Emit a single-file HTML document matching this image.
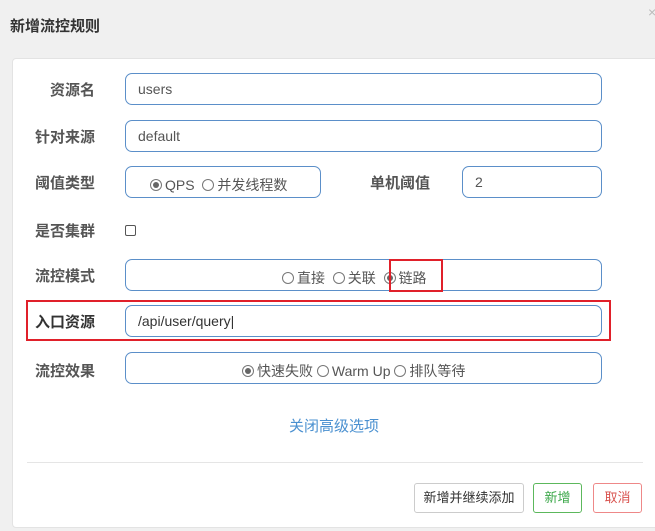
<!DOCTYPE html>
<html><head><meta charset="utf-8"><style>
*{box-sizing:border-box;margin:0;padding:0}
body{width:655px;height:531px;background:#f0f0f0;font-family:"Liberation Sans","Noto Sans CJK SC",sans-serif;position:relative;overflow:hidden;color:#555}
.abs{position:absolute}
.title{left:10px;top:15px;font-size:15px;font-weight:bold;color:#333}
.close{left:648px;top:4px;color:#bbb;font-size:14px}
.card{left:12px;top:58px;width:650px;height:470px;background:#fff;border:1px solid #e3e3e3;border-radius:4px}
.lbl{font-size:15px;font-weight:bold;color:#555;text-align:right;width:62px;left:33px}
.inp{border:1px solid #5b8fc9;border-radius:7px;height:32px;font-size:14px;color:#555;padding:7px 12px;background:#fff}
.rad{display:inline-block;width:12px;height:12px;border:1px solid #777;border-radius:50%;vertical-align:-1px;margin-right:3px;position:relative}
.rad.on::after{content:"";position:absolute;left:2px;top:2px;width:6px;height:6px;border-radius:50%;background:#666}
.btn{height:30px;border:1px solid #ccc;border-radius:3px;font-size:13px;text-align:center;line-height:28px;background:#fff}
</style></head><body>
<div class="abs title">新增流控规则</div>
<div class="abs close">×</div>
<div class="abs card"></div>

<div class="abs lbl" style="top:79px">资源名</div>
<div class="abs inp" style="left:125px;top:73px;width:477px">users</div>

<div class="abs lbl" style="top:126px">针对来源</div>
<div class="abs inp" style="left:125px;top:120px;width:477px">default</div>

<div class="abs lbl" style="top:172px">阈值类型</div>
<div class="abs inp" style="left:125px;top:166px;width:196px;padding-left:24px;padding-top:8px"><span class="rad on"></span>QPS &nbsp;<span class="rad"></span>并发线程数</div>
<div class="abs" style="left:370px;top:172px;font-size:15px;font-weight:bold">单机阈值</div>
<div class="abs inp" style="left:462px;top:166px;width:140px">2</div>

<div class="abs lbl" style="top:220px">是否集群</div>
<div class="abs" style="left:125px;top:225px;width:11px;height:11px;border:1px solid #555;border-radius:2px"></div>

<div class="abs lbl" style="top:265px">流控模式</div>
<div class="abs inp" style="left:125px;top:259px;width:477px;padding:8px 0 0 156px"><span class="rad"></span>直接 &nbsp;<span class="rad"></span>关联 &nbsp;<span class="rad on"></span>链路</div>
<div class="abs" style="left:389px;top:259px;width:54px;height:33px;border:2px solid #e0202a"></div>

<div class="abs" style="left:26px;top:300px;width:585px;height:41px;border:2px solid #e0202a"></div>
<div class="abs lbl" style="top:311px;color:#333">入口资源</div>
<div class="abs inp" style="left:125px;top:305px;width:477px;color:#333">/api/user/query|</div>

<div class="abs lbl" style="top:360px">流控效果</div>
<div class="abs inp" style="left:125px;top:352px;width:477px;padding:8px 0 0 116px"><span class="rad on"></span>快速失败 <span class="rad"></span>Warm Up <span class="rad"></span>排队等待</div>

<div class="abs" style="left:289px;top:415px;font-size:15px;color:#4a90d0">关闭高级选项</div>
<div class="abs" style="left:27px;top:462px;width:616px;height:1px;background:#e5e5e5"></div>

<div class="abs btn" style="left:414px;top:483px;width:110px;color:#333">新增并继续添加</div>
<div class="abs btn" style="left:533px;top:483px;width:49px;color:#3ca84a;border-color:#5cb85c">新增</div>
<div class="abs btn" style="left:593px;top:483px;width:49px;color:#d9534f;border-color:#e88">取消</div>
</body></html>
